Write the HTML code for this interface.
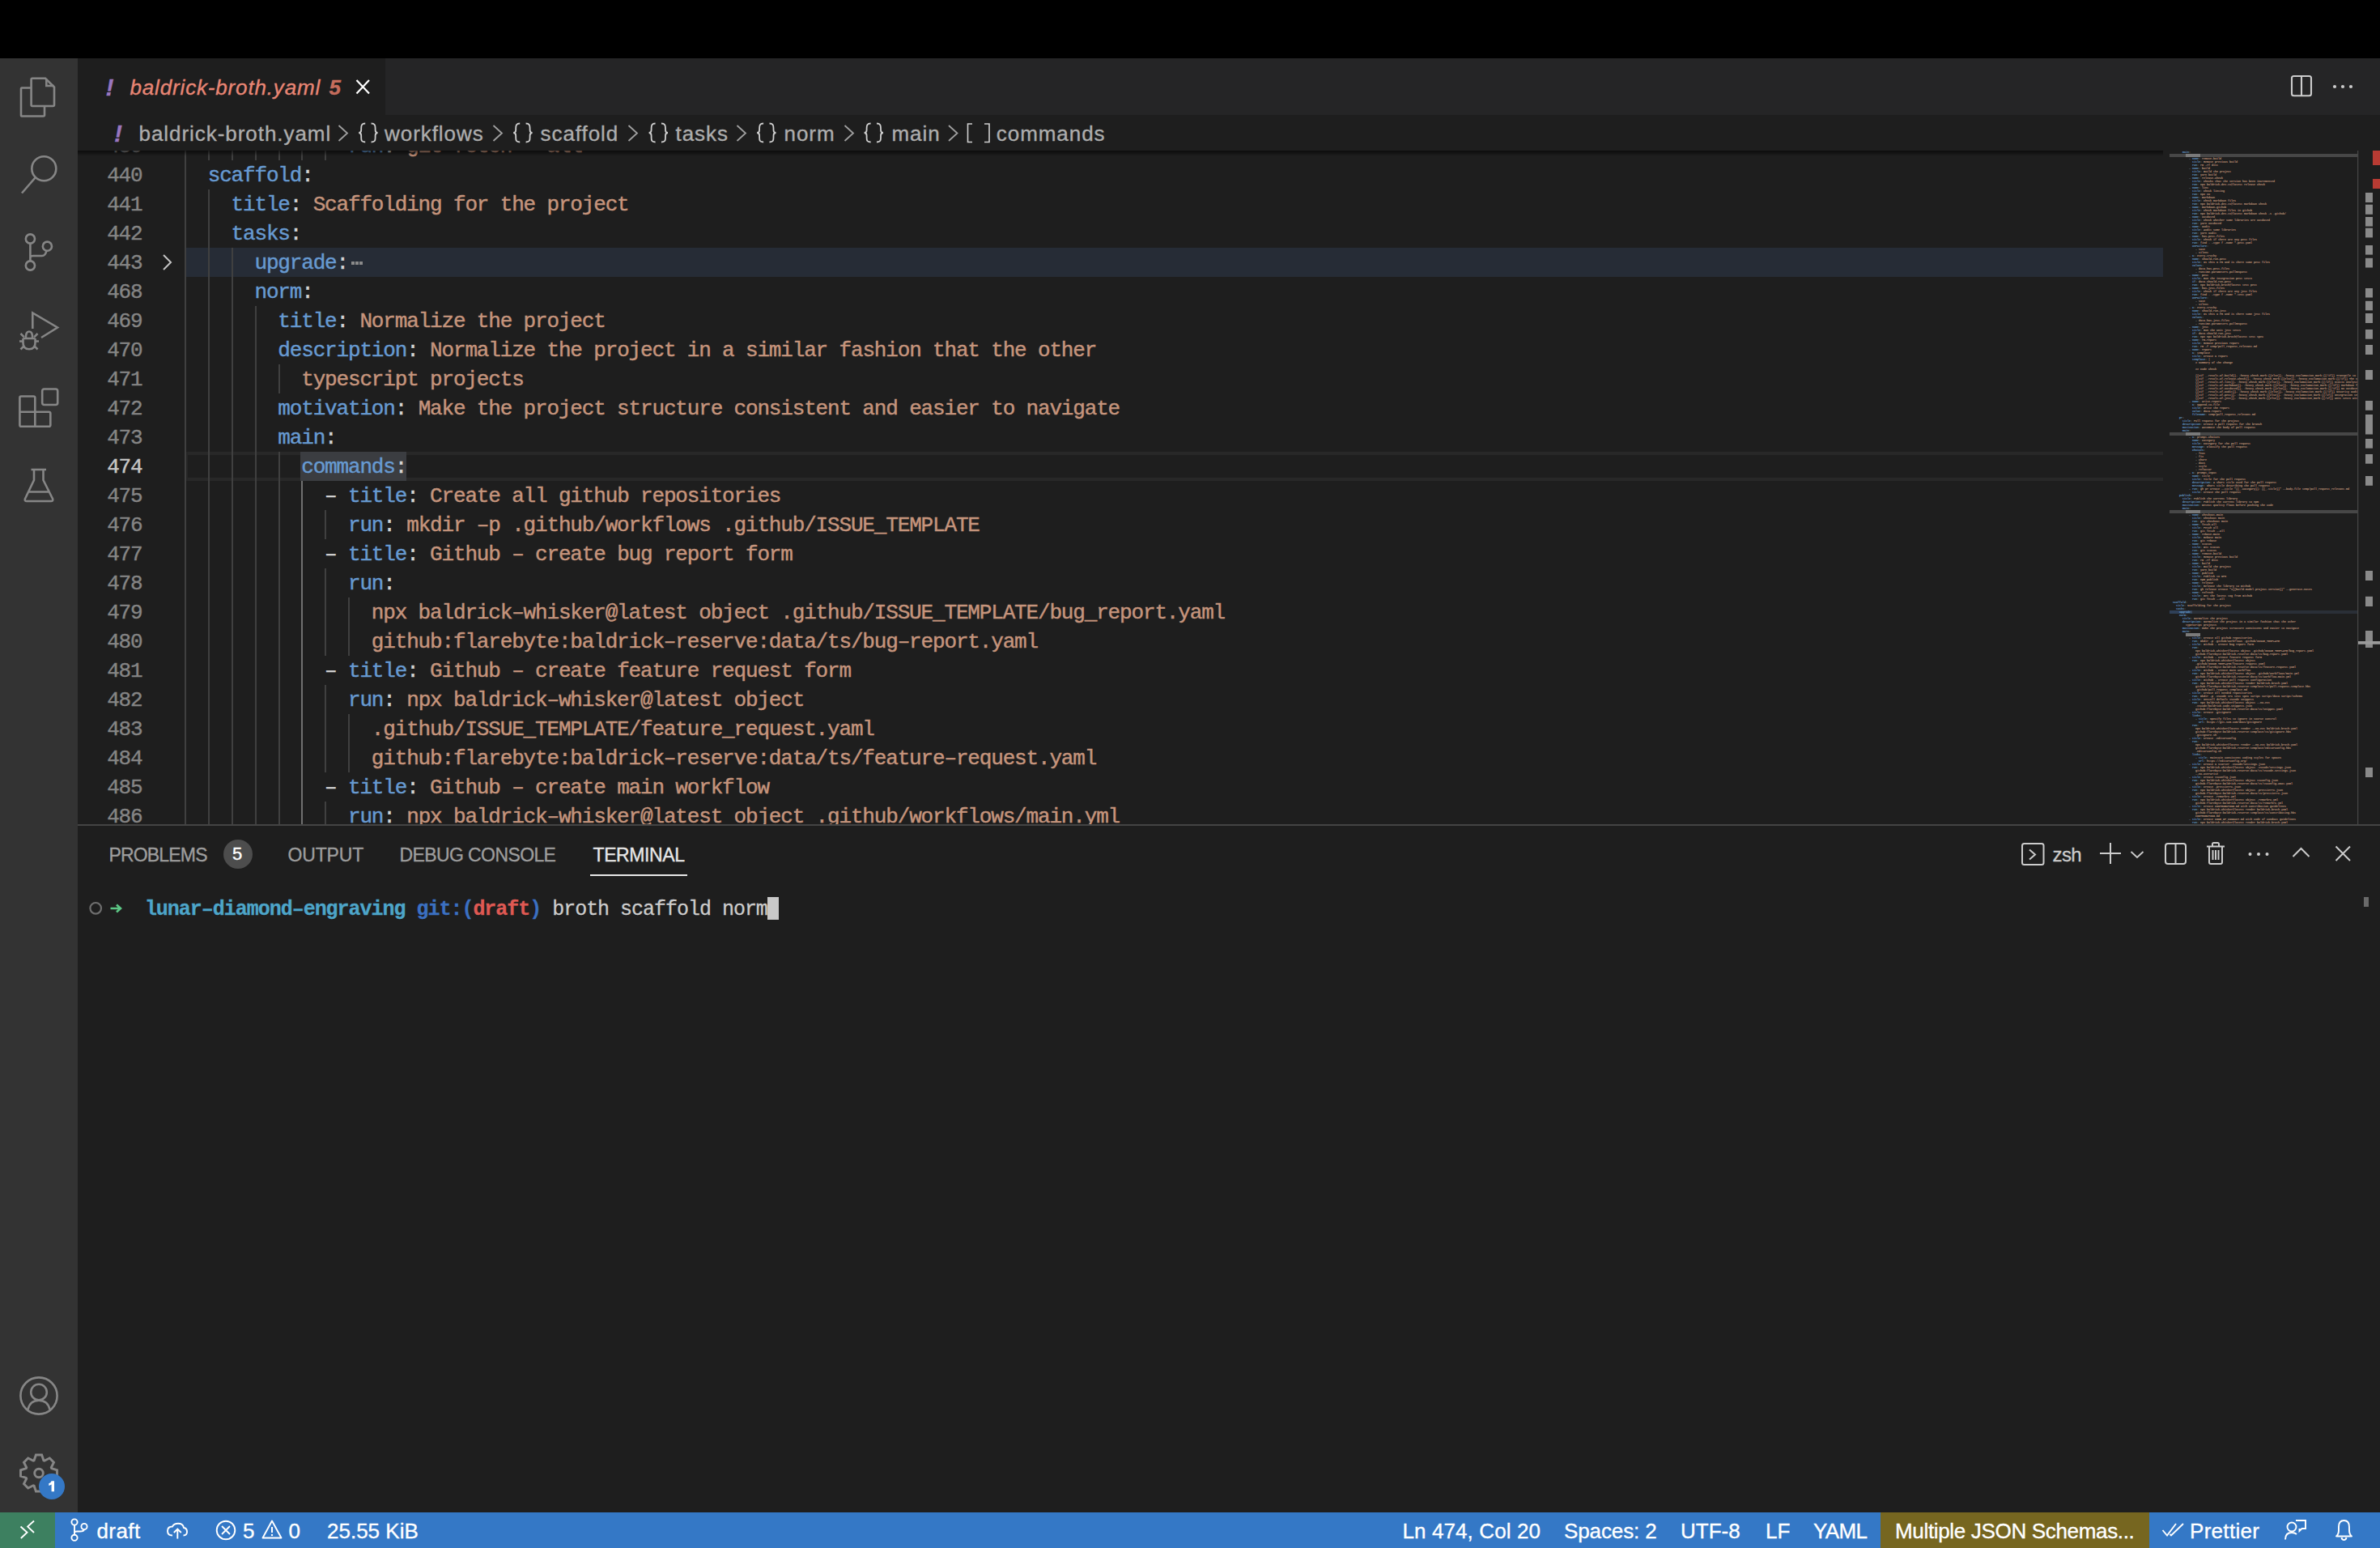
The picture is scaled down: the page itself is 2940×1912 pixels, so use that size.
<!DOCTYPE html><html><head><meta charset="utf-8"><style>
*{margin:0;padding:0;box-sizing:border-box}
html,body{width:2940px;height:1912px;overflow:hidden;background:#1e1e1e}
body{position:relative;font-family:"Liberation Sans",sans-serif}
.a{position:absolute}
.mono{font-family:"Liberation Mono",monospace}
.row{position:absolute;left:0;height:36px;white-space:pre;-webkit-text-stroke:0.45px currentColor;font-family:"Liberation Mono",monospace;font-size:26px;letter-spacing:-1.162px;line-height:36px}
.ln{position:absolute;left:96px;-webkit-text-stroke:0.4px currentColor;width:79.5px;text-align:right;height:36px;white-space:pre;font-family:"Liberation Mono",monospace;font-size:26px;letter-spacing:-1.162px;line-height:36px;color:#858585}
.k{color:#679ad1}.s{color:#c5947c}.p{color:#d4d4d4}
.g{position:absolute;width:2px;background:#404040}
.ui{font-family:"Liberation Sans",sans-serif;white-space:pre}
.mm{position:absolute;height:3px}
svg{position:absolute;overflow:visible}
.mmt{position:absolute;left:0;top:0;transform-origin:0 0;transform:scale(0.2);white-space:pre;font-family:'Liberation Mono',monospace;font-size:16.667px;line-height:20px;font-weight:bold;color:#c5947c;width:1200px}
.mmt b{color:#679ad1;font-weight:bold}
.mmt i{color:#9a9a9a;font-style:normal}
</style></head><body>
<div class="a" style="left:0;top:0;width:2940px;height:72px;background:#000"></div>
<div class="a" style="left:0;top:72px;width:96px;height:1796px;background:#333333"></div>
<div class="a" style="left:96px;top:72px;width:2844px;height:70px;background:#252526"></div>
<div class="a" style="left:96px;top:72px;width:380px;height:70px;background:#1e1e1e"></div>
<div class="a" style="left:96px;top:142px;width:2844px;height:876px;background:#1e1e1e"></div>
<div class="a" style="left:96px;top:186px;width:2576px;height:832px;overflow:hidden"><div class="a" style="left:-96px;top:-186px;width:2940px;height:1912px">
<div class="a" style="left:228px;top:306px;width:2444px;height:36px;background:#262c36"></div>
<div class="a" style="left:230px;top:558px;width:2442px;height:4px;background:#282828"></div>
<div class="a" style="left:230px;top:590px;width:2442px;height:4px;background:#282828"></div>
<div class="a" style="left:230px;top:558px;width:2px;height:36px;background:#262626"></div>
<div class="a" style="left:370.7px;top:558px;width:130.9px;height:36px;background:#3b3d41"></div>
<div class="g" style="left:228.0px;top:162px;height:36px;background:#404040"></div>
<div class="g" style="left:256.9px;top:162px;height:36px;background:#404040"></div>
<div class="g" style="left:285.8px;top:162px;height:36px;background:#404040"></div>
<div class="g" style="left:314.6px;top:162px;height:36px;background:#404040"></div>
<div class="g" style="left:343.5px;top:162px;height:36px;background:#404040"></div>
<div class="g" style="left:372.4px;top:162px;height:36px;background:#404040"></div>
<div class="g" style="left:401.3px;top:162px;height:36px;background:#404040"></div>
<div class="g" style="left:228.0px;top:198px;height:36px;background:#404040"></div>
<div class="g" style="left:228.0px;top:234px;height:36px;background:#404040"></div>
<div class="g" style="left:256.9px;top:234px;height:36px;background:#404040"></div>
<div class="g" style="left:228.0px;top:270px;height:36px;background:#404040"></div>
<div class="g" style="left:256.9px;top:270px;height:36px;background:#404040"></div>
<div class="g" style="left:228.0px;top:306px;height:36px;background:#404040"></div>
<div class="g" style="left:256.9px;top:306px;height:36px;background:#404040"></div>
<div class="g" style="left:285.8px;top:306px;height:36px;background:#404040"></div>
<div class="g" style="left:228.0px;top:342px;height:36px;background:#404040"></div>
<div class="g" style="left:256.9px;top:342px;height:36px;background:#404040"></div>
<div class="g" style="left:285.8px;top:342px;height:36px;background:#404040"></div>
<div class="g" style="left:228.0px;top:378px;height:36px;background:#404040"></div>
<div class="g" style="left:256.9px;top:378px;height:36px;background:#404040"></div>
<div class="g" style="left:285.8px;top:378px;height:36px;background:#404040"></div>
<div class="g" style="left:314.6px;top:378px;height:36px;background:#404040"></div>
<div class="g" style="left:228.0px;top:414px;height:36px;background:#404040"></div>
<div class="g" style="left:256.9px;top:414px;height:36px;background:#404040"></div>
<div class="g" style="left:285.8px;top:414px;height:36px;background:#404040"></div>
<div class="g" style="left:314.6px;top:414px;height:36px;background:#404040"></div>
<div class="g" style="left:228.0px;top:450px;height:36px;background:#404040"></div>
<div class="g" style="left:256.9px;top:450px;height:36px;background:#404040"></div>
<div class="g" style="left:285.8px;top:450px;height:36px;background:#404040"></div>
<div class="g" style="left:314.6px;top:450px;height:36px;background:#404040"></div>
<div class="g" style="left:343.5px;top:450px;height:36px;background:#404040"></div>
<div class="g" style="left:228.0px;top:486px;height:36px;background:#404040"></div>
<div class="g" style="left:256.9px;top:486px;height:36px;background:#404040"></div>
<div class="g" style="left:285.8px;top:486px;height:36px;background:#404040"></div>
<div class="g" style="left:314.6px;top:486px;height:36px;background:#404040"></div>
<div class="g" style="left:228.0px;top:522px;height:36px;background:#404040"></div>
<div class="g" style="left:256.9px;top:522px;height:36px;background:#404040"></div>
<div class="g" style="left:285.8px;top:522px;height:36px;background:#404040"></div>
<div class="g" style="left:314.6px;top:522px;height:36px;background:#404040"></div>
<div class="g" style="left:228.0px;top:558px;height:36px;background:#404040"></div>
<div class="g" style="left:256.9px;top:558px;height:36px;background:#404040"></div>
<div class="g" style="left:285.8px;top:558px;height:36px;background:#404040"></div>
<div class="g" style="left:314.6px;top:558px;height:36px;background:#404040"></div>
<div class="g" style="left:343.5px;top:558px;height:36px;background:#404040"></div>
<div class="g" style="left:228.0px;top:594px;height:36px;background:#404040"></div>
<div class="g" style="left:256.9px;top:594px;height:36px;background:#404040"></div>
<div class="g" style="left:285.8px;top:594px;height:36px;background:#404040"></div>
<div class="g" style="left:314.6px;top:594px;height:36px;background:#404040"></div>
<div class="g" style="left:343.5px;top:594px;height:36px;background:#404040"></div>
<div class="g" style="left:372.4px;top:594px;height:36px;background:#707070"></div>
<div class="g" style="left:228.0px;top:630px;height:36px;background:#404040"></div>
<div class="g" style="left:256.9px;top:630px;height:36px;background:#404040"></div>
<div class="g" style="left:285.8px;top:630px;height:36px;background:#404040"></div>
<div class="g" style="left:314.6px;top:630px;height:36px;background:#404040"></div>
<div class="g" style="left:343.5px;top:630px;height:36px;background:#404040"></div>
<div class="g" style="left:372.4px;top:630px;height:36px;background:#707070"></div>
<div class="g" style="left:401.3px;top:630px;height:36px;background:#404040"></div>
<div class="g" style="left:228.0px;top:666px;height:36px;background:#404040"></div>
<div class="g" style="left:256.9px;top:666px;height:36px;background:#404040"></div>
<div class="g" style="left:285.8px;top:666px;height:36px;background:#404040"></div>
<div class="g" style="left:314.6px;top:666px;height:36px;background:#404040"></div>
<div class="g" style="left:343.5px;top:666px;height:36px;background:#404040"></div>
<div class="g" style="left:372.4px;top:666px;height:36px;background:#707070"></div>
<div class="g" style="left:228.0px;top:702px;height:36px;background:#404040"></div>
<div class="g" style="left:256.9px;top:702px;height:36px;background:#404040"></div>
<div class="g" style="left:285.8px;top:702px;height:36px;background:#404040"></div>
<div class="g" style="left:314.6px;top:702px;height:36px;background:#404040"></div>
<div class="g" style="left:343.5px;top:702px;height:36px;background:#404040"></div>
<div class="g" style="left:372.4px;top:702px;height:36px;background:#707070"></div>
<div class="g" style="left:401.3px;top:702px;height:36px;background:#404040"></div>
<div class="g" style="left:228.0px;top:738px;height:36px;background:#404040"></div>
<div class="g" style="left:256.9px;top:738px;height:36px;background:#404040"></div>
<div class="g" style="left:285.8px;top:738px;height:36px;background:#404040"></div>
<div class="g" style="left:314.6px;top:738px;height:36px;background:#404040"></div>
<div class="g" style="left:343.5px;top:738px;height:36px;background:#404040"></div>
<div class="g" style="left:372.4px;top:738px;height:36px;background:#707070"></div>
<div class="g" style="left:401.3px;top:738px;height:36px;background:#404040"></div>
<div class="g" style="left:430.1px;top:738px;height:36px;background:#404040"></div>
<div class="g" style="left:228.0px;top:774px;height:36px;background:#404040"></div>
<div class="g" style="left:256.9px;top:774px;height:36px;background:#404040"></div>
<div class="g" style="left:285.8px;top:774px;height:36px;background:#404040"></div>
<div class="g" style="left:314.6px;top:774px;height:36px;background:#404040"></div>
<div class="g" style="left:343.5px;top:774px;height:36px;background:#404040"></div>
<div class="g" style="left:372.4px;top:774px;height:36px;background:#707070"></div>
<div class="g" style="left:401.3px;top:774px;height:36px;background:#404040"></div>
<div class="g" style="left:430.1px;top:774px;height:36px;background:#404040"></div>
<div class="g" style="left:228.0px;top:810px;height:36px;background:#404040"></div>
<div class="g" style="left:256.9px;top:810px;height:36px;background:#404040"></div>
<div class="g" style="left:285.8px;top:810px;height:36px;background:#404040"></div>
<div class="g" style="left:314.6px;top:810px;height:36px;background:#404040"></div>
<div class="g" style="left:343.5px;top:810px;height:36px;background:#404040"></div>
<div class="g" style="left:372.4px;top:810px;height:36px;background:#707070"></div>
<div class="g" style="left:228.0px;top:846px;height:36px;background:#404040"></div>
<div class="g" style="left:256.9px;top:846px;height:36px;background:#404040"></div>
<div class="g" style="left:285.8px;top:846px;height:36px;background:#404040"></div>
<div class="g" style="left:314.6px;top:846px;height:36px;background:#404040"></div>
<div class="g" style="left:343.5px;top:846px;height:36px;background:#404040"></div>
<div class="g" style="left:372.4px;top:846px;height:36px;background:#707070"></div>
<div class="g" style="left:401.3px;top:846px;height:36px;background:#404040"></div>
<div class="g" style="left:228.0px;top:882px;height:36px;background:#404040"></div>
<div class="g" style="left:256.9px;top:882px;height:36px;background:#404040"></div>
<div class="g" style="left:285.8px;top:882px;height:36px;background:#404040"></div>
<div class="g" style="left:314.6px;top:882px;height:36px;background:#404040"></div>
<div class="g" style="left:343.5px;top:882px;height:36px;background:#404040"></div>
<div class="g" style="left:372.4px;top:882px;height:36px;background:#707070"></div>
<div class="g" style="left:401.3px;top:882px;height:36px;background:#404040"></div>
<div class="g" style="left:430.1px;top:882px;height:36px;background:#404040"></div>
<div class="g" style="left:228.0px;top:918px;height:36px;background:#404040"></div>
<div class="g" style="left:256.9px;top:918px;height:36px;background:#404040"></div>
<div class="g" style="left:285.8px;top:918px;height:36px;background:#404040"></div>
<div class="g" style="left:314.6px;top:918px;height:36px;background:#404040"></div>
<div class="g" style="left:343.5px;top:918px;height:36px;background:#404040"></div>
<div class="g" style="left:372.4px;top:918px;height:36px;background:#707070"></div>
<div class="g" style="left:401.3px;top:918px;height:36px;background:#404040"></div>
<div class="g" style="left:430.1px;top:918px;height:36px;background:#404040"></div>
<div class="g" style="left:228.0px;top:954px;height:36px;background:#404040"></div>
<div class="g" style="left:256.9px;top:954px;height:36px;background:#404040"></div>
<div class="g" style="left:285.8px;top:954px;height:36px;background:#404040"></div>
<div class="g" style="left:314.6px;top:954px;height:36px;background:#404040"></div>
<div class="g" style="left:343.5px;top:954px;height:36px;background:#404040"></div>
<div class="g" style="left:372.4px;top:954px;height:36px;background:#707070"></div>
<div class="g" style="left:228.0px;top:990px;height:36px;background:#404040"></div>
<div class="g" style="left:256.9px;top:990px;height:36px;background:#404040"></div>
<div class="g" style="left:285.8px;top:990px;height:36px;background:#404040"></div>
<div class="g" style="left:314.6px;top:990px;height:36px;background:#404040"></div>
<div class="g" style="left:343.5px;top:990px;height:36px;background:#404040"></div>
<div class="g" style="left:372.4px;top:990px;height:36px;background:#707070"></div>
<div class="g" style="left:401.3px;top:990px;height:36px;background:#404040"></div>
<div class="row" style="left:227.8px;top:163px">              <span class="k">run</span><span class="p">:</span><span class="s"> git fetch ––all</span></div>
<div class="ln" style="top:163px;color:#858585">439</div>
<div class="row" style="left:227.8px;top:199px">  <span class="k">scaffold</span><span class="p">:</span></div>
<div class="ln" style="top:199px;color:#858585">440</div>
<div class="row" style="left:227.8px;top:235px">    <span class="k">title</span><span class="p">:</span><span class="s"> Scaffolding for the project</span></div>
<div class="ln" style="top:235px;color:#858585">441</div>
<div class="row" style="left:227.8px;top:271px">    <span class="k">tasks</span><span class="p">:</span></div>
<div class="ln" style="top:271px;color:#858585">442</div>
<div class="row" style="left:227.8px;top:307px">      <span class="k">upgrade</span><span class="p">:</span></div>
<div class="ln" style="top:307px;color:#858585">443</div>
<div class="row" style="left:227.8px;top:343px">      <span class="k">norm</span><span class="p">:</span></div>
<div class="ln" style="top:343px;color:#858585">468</div>
<div class="row" style="left:227.8px;top:379px">        <span class="k">title</span><span class="p">:</span><span class="s"> Normalize the project</span></div>
<div class="ln" style="top:379px;color:#858585">469</div>
<div class="row" style="left:227.8px;top:415px">        <span class="k">description</span><span class="p">:</span><span class="s"> Normalize the project in a similar fashion that the other</span></div>
<div class="ln" style="top:415px;color:#858585">470</div>
<div class="row" style="left:227.8px;top:451px">          <span class="s">typescript projects</span></div>
<div class="ln" style="top:451px;color:#858585">471</div>
<div class="row" style="left:227.8px;top:487px">        <span class="k">motivation</span><span class="p">:</span><span class="s"> Make the project structure consistent and easier to navigate</span></div>
<div class="ln" style="top:487px;color:#858585">472</div>
<div class="row" style="left:227.8px;top:523px">        <span class="k">main</span><span class="p">:</span></div>
<div class="ln" style="top:523px;color:#858585">473</div>
<div class="row" style="left:227.8px;top:559px">          <span class="k">commands</span><span class="p">:</span></div>
<div class="ln" style="top:559px;color:#c6c6c6">474</div>
<div class="row" style="left:227.8px;top:595px">            <span class="p">– </span><span class="k">title</span><span class="p">:</span><span class="s"> Create all github repositories</span></div>
<div class="ln" style="top:595px;color:#858585">475</div>
<div class="row" style="left:227.8px;top:631px">              <span class="k">run</span><span class="p">:</span><span class="s"> mkdir –p .github/workflows .github/ISSUE_TEMPLATE</span></div>
<div class="ln" style="top:631px;color:#858585">476</div>
<div class="row" style="left:227.8px;top:667px">            <span class="p">– </span><span class="k">title</span><span class="p">:</span><span class="s"> Github – create bug report form</span></div>
<div class="ln" style="top:667px;color:#858585">477</div>
<div class="row" style="left:227.8px;top:703px">              <span class="k">run</span><span class="p">:</span></div>
<div class="ln" style="top:703px;color:#858585">478</div>
<div class="row" style="left:227.8px;top:739px">                <span class="s">npx baldrick–whisker@latest object .github/ISSUE_TEMPLATE/bug_report.yaml</span></div>
<div class="ln" style="top:739px;color:#858585">479</div>
<div class="row" style="left:227.8px;top:775px">                <span class="s">github:flarebyte:baldrick–reserve:data/ts/bug–report.yaml</span></div>
<div class="ln" style="top:775px;color:#858585">480</div>
<div class="row" style="left:227.8px;top:811px">            <span class="p">– </span><span class="k">title</span><span class="p">:</span><span class="s"> Github – create feature request form</span></div>
<div class="ln" style="top:811px;color:#858585">481</div>
<div class="row" style="left:227.8px;top:847px">              <span class="k">run</span><span class="p">:</span><span class="s"> npx baldrick–whisker@latest object</span></div>
<div class="ln" style="top:847px;color:#858585">482</div>
<div class="row" style="left:227.8px;top:883px">                <span class="s">.github/ISSUE_TEMPLATE/feature_request.yaml</span></div>
<div class="ln" style="top:883px;color:#858585">483</div>
<div class="row" style="left:227.8px;top:919px">                <span class="s">github:flarebyte:baldrick–reserve:data/ts/feature–request.yaml</span></div>
<div class="ln" style="top:919px;color:#858585">484</div>
<div class="row" style="left:227.8px;top:955px">            <span class="p">– </span><span class="k">title</span><span class="p">:</span><span class="s"> Github – create main workflow</span></div>
<div class="ln" style="top:955px;color:#858585">485</div>
<div class="row" style="left:227.8px;top:991px">              <span class="k">run</span><span class="p">:</span><span class="s"> npx baldrick–whisker@latest object .github/workflows/main.yml</span></div>
<div class="ln" style="top:991px;color:#858585">486</div>
<div class="a" style="left:433.9px;top:323px;width:14px;height:4px;background:repeating-linear-gradient(90deg,#8a8a8a 0 4px,transparent 4px 5px)"></div>
<svg style="left:196px;top:314px" width="20" height="20" viewBox="0 0 20 20"><path d="M6 1 L15 10 L6 19" fill="none" stroke="#c5c5c5" stroke-width="2"/></svg>
</div></div>
<div class="a" style="left:96px;top:186px;width:2576px;height:7px;background:linear-gradient(rgba(0,0,0,0.6),rgba(0,0,0,0))"></div>
<div class="a" style="left:0;top:1868px;width:2940px;height:44px;background:#3478c6"></div>
<div class="a" style="left:0;top:1868px;width:68px;height:44px;background:#3d8060"></div>
<div class="a" style="left:2323px;top:1868px;width:332px;height:44px;background:#766620"></div>
<svg style="left:0;top:0" width="2940" height="1912" viewBox="0 0 2940 1912"><rect x="2680" y="190" width="232" height="4" fill="#474747"/><rect x="2700" y="190" width="18" height="4" fill="#7a7a7a"/><rect x="2680" y="534" width="232" height="4" fill="#474747"/><rect x="2700" y="534" width="18" height="4" fill="#7a7a7a"/><rect x="2680" y="630" width="232" height="4" fill="#474747"/><rect x="2700" y="630" width="18" height="4" fill="#7a7a7a"/><rect x="2700" y="782" width="18" height="4" fill="#7a7a7a"/><rect x="2680" y="754" width="28" height="4" fill="#2f4058"/><rect x="2708" y="754" width="204" height="4" fill="#2a2f37"/><rect x="2912" y="186" width="1.3" height="832" fill="#454545"/><rect x="2922" y="238" width="9" height="12.0" fill="#8a8a8a"/><rect x="2922" y="252.7" width="9" height="12.1" fill="#8a8a8a"/><rect x="2922" y="268" width="9" height="11.6" fill="#8a8a8a"/><rect x="2922" y="281.7" width="9" height="11.7" fill="#8a8a8a"/><rect x="2922" y="303" width="9" height="11.6" fill="#8a8a8a"/><rect x="2922" y="318.8" width="9" height="11.7" fill="#8a8a8a"/><rect x="2922" y="356" width="9" height="11.5" fill="#8a8a8a"/><rect x="2922" y="371.8" width="9" height="11.6" fill="#8a8a8a"/><rect x="2922" y="387" width="9" height="12.0" fill="#8a8a8a"/><rect x="2922" y="407" width="9" height="11.7" fill="#8a8a8a"/><rect x="2922" y="426" width="9" height="12.0" fill="#8a8a8a"/><rect x="2922" y="457" width="9" height="12.0" fill="#8a8a8a"/><rect x="2922" y="495" width="9" height="11.8" fill="#8a8a8a"/><rect x="2922" y="512" width="9" height="24.5" fill="#8a8a8a"/><rect x="2922" y="542" width="9" height="11.7" fill="#8a8a8a"/><rect x="2922" y="561" width="9" height="11.7" fill="#8a8a8a"/><rect x="2922" y="588" width="9" height="11.8" fill="#8a8a8a"/><rect x="2922" y="705" width="9" height="12.0" fill="#8a8a8a"/><rect x="2922" y="736.8" width="9" height="12.2" fill="#8a8a8a"/><rect x="2922" y="779" width="9" height="21.0" fill="#8a8a8a"/><rect x="2922" y="948" width="9" height="12.0" fill="#8a8a8a"/><rect x="2931" y="186" width="9" height="18" fill="#b83b33"/><rect x="2931" y="221" width="9" height="12" fill="#b83b33"/><rect x="2913" y="792" width="27" height="3.8" fill="#9a9a9a"/></svg>
<div class="a" style="left:2680px;top:186px;width:232px;height:832px;overflow:hidden"><div class="mmt">        <b>main</b><i>:</i>

            <i>- </i><b>name</b><i>:</i> remove-build
              <b>title</b><i>:</i> Remove previous build
              <b>run</b><i>:</i> rm -rf dist
            <i>- </i><b>name</b><i>:</i> build
              <b>title</b><i>:</i> Build the project
              <b>run</b><i>:</i> yarn build
            <i>- </i><b>name</b><i>:</i> release-check
              <b>title</b><i>:</i> Checks that the version has been incremented
              <b>run</b><i>:</i> npx baldrick-dev-ts@latest release check
            <i>- </i><b>name</b><i>:</i> lint
              <b>title</b><i>:</i> Check linting
              <b>run</b><i>:</i> npx xo
            <i>- </i><b>name</b><i>:</i> markdown
              <b>title</b><i>:</i> Check markdown files
              <b>run</b><i>:</i> npx baldrick-dev-ts@latest markdown check
            <i>- </i><b>name</b><i>:</i> markdown-github
              <b>title</b><i>:</i> Check markdown files in github
              <b>run</b><i>:</i> npx baldrick-dev-ts@latest markdown check -s .github/
            <i>- </i><b>name</b><i>:</i> outdated
              <b>title</b><i>:</i> Check whether some libraries are outdated
              <b>run</b><i>:</i> yarn outdated
            <i>- </i><b>name</b><i>:</i> audit
              <b>title</b><i>:</i> Audit some libraries
              <b>run</b><i>:</i> yarn audit
            <i>- </i><b>name</b><i>:</i> has-pest-files
              <b>title</b><i>:</i> Check if there are any pest files
              <b>run</b><i>:</i> find . -type f -name *.pest.yaml
              <b>onFailure</b><i>:</i>
                <i>- </i>save
                <i>- </i>silent
            <i>- </i><b>a</b><i>:</i> every-truthy
              <b>name</b><i>:</i> should-run-pest
              <b>title</b><i>:</i> Is this a PR and is there some pest files
              <b>values</b><i>:</i>
                <i>- </i>data.has-pest-files
                <i>- </i>runtime.parameters.pullRequest
            <i>- </i><b>name</b><i>:</i> pest
              <b>title</b><i>:</i> Run the integration pest tests
              <b>if</b><i>:</i> data.should-run-pest
              <b>run</b><i>:</i> npx baldrick-broth@latest test pest
            <i>- </i><b>name</b><i>:</i> has-jest-files
              <b>title</b><i>:</i> Check if there are any jest files
              <b>run</b><i>:</i> find . -type f -name *.test.yaml
              <b>onFailure</b><i>:</i>
                <i>- </i>save
                <i>- </i>silent
            <i>- </i><b>a</b><i>:</i> every-truthy
              <b>name</b><i>:</i> should-run-jest
              <b>title</b><i>:</i> Is this a PR and is there some jest files
              <b>values</b><i>:</i>
                <i>- </i>data.has-jest-files
                <i>- </i>runtime.parameters.pullRequest
            <i>- </i><b>name</b><i>:</i> jest
              <b>title</b><i>:</i> Run the unit jest tests
              <b>if</b><i>:</i> data.should-run-jest
              <b>run</b><i>:</i> npx npx baldrick-broth@latest test spec
            <i>- </i><b>name</b><i>:</i> rm-report
              <b>title</b><i>:</i> Remove previous report
              <b>run</b><i>:</i> rm -f temp/pull_request_relevant.md
            <i>- </i><b>name</b><i>:</i> report
              <b>a</b><i>:</i> template
              <b>title</b><i>:</i> Create a report
              <b>template</b><i>:</i> |
                # Summary of the change

                ## Code check

                {{#if _.result-of-build}}- :heavy_check_mark:{{else}}- :heavy_exclamation_mark:{{/if}} Transpile to javascript
                {{#if _.result-of-release-check}}- :heavy_check_mark:{{else}}- :heavy_exclamation_mark:{{/if}} The version
                {{#if _.result-of-lint}}- :heavy_check_mark:{{else}}- :heavy_exclamation_mark:{{/if}} Static analysis
                {{#if _.result-of-markdown}}- :heavy_check_mark:{{else}}- :heavy_exclamation_mark:{{/if}} Markdown files
                {{#if _.result-of-outdated}}- :heavy_check_mark:{{else}}- :heavy_exclamation_mark:{{/if}} No outdated
                {{#if _.result-of-audit}}- :heavy_check_mark:{{else}}- :heavy_exclamation_mark:{{/if}} Security audit
                {{#if _.result-of-pest}}- :heavy_check_mark:{{else}}- :heavy_exclamation_mark:{{/if}} Integration tests
                {{#if _.result-of-jest}}- :heavy_check_mark:{{else}}- :heavy_exclamation_mark:{{/if}} Unit tests with
            <i>- </i><b>name</b><i>:</i> write-report
              <b>a</b><i>:</i> append-to-file
              <b>title</b><i>:</i> Write the report
              <b>value</b><i>:</i> data.report
              <b>filename</b><i>:</i> temp/pull_request_relevant.md
      <b>pr</b><i>:</i>
        <b>title</b><i>:</i> Pull request for the project
        <b>description</b><i>:</i> Create a pull request for the branch
        <b>motivation</b><i>:</i> Automate the body of pull request
        <b>main</b><i>:</i>

            <i>- </i><b>a</b><i>:</i> prompt-choices
              <b>name</b><i>:</i> category
              <b>title</b><i>:</i> Category for the pull request
              <b>message</b><i>:</i> Classify the pull request
              <b>choices</b><i>:</i>
                <i>- </i>feat
                <i>- </i>fix
                <i>- </i>chore
                <i>- </i>docs
                <i>- </i>style
                <i>- </i>refactor
            <i>- </i><b>a</b><i>:</i> prompt-input
              <b>name</b><i>:</i> title
              <b>title</b><i>:</i> Title for the pull request
              <b>description</b><i>:</i> A short title used for the pull request
              <b>message</b><i>:</i> Short title describing the pull request
            <i>- </i><b>run</b><i>:</i> gh pr create --title &quot;{{_.category}}: {{_.title}}&quot; --body-file temp/pull_request_relevant.md
              <b>title</b><i>:</i> Create the pull request
      <b>publish</b><i>:</i>
        <b>title</b><i>:</i> Publish the current library
        <b>description</b><i>:</i> Publish the current library to npm
        <b>motivation</b><i>:</i> Detect quality flaws before pushing the code
        <b>main</b><i>:</i>

            <i>- </i><b>name</b><i>:</i> checkout-main
              <b>title</b><i>:</i> Checkout main
              <b>run</b><i>:</i> git checkout main
            <i>- </i><b>name</b><i>:</i> fetch-all
              <b>title</b><i>:</i> Fetch all
              <b>run</b><i>:</i> git fetch --all
            <i>- </i><b>name</b><i>:</i> rebase-main
              <b>title</b><i>:</i> Rebase main
              <b>run</b><i>:</i> git rebase
            <i>- </i><b>name</b><i>:</i> status
              <b>title</b><i>:</i> Git status
              <b>run</b><i>:</i> git status
            <i>- </i><b>name</b><i>:</i> remove-build
              <b>title</b><i>:</i> Remove previous build
              <b>run</b><i>:</i> rm -rf dist
            <i>- </i><b>name</b><i>:</i> build
              <b>title</b><i>:</i> Build the project
              <b>run</b><i>:</i> yarn build
            <i>- </i><b>name</b><i>:</i> publish
              <b>title</b><i>:</i> Publish to NPM
              <b>run</b><i>:</i> npm publish
            <i>- </i><b>name</b><i>:</i> release
              <b>title</b><i>:</i> Release the library to Github
              <b>run</b><i>:</i> gh release create &quot;v{{build.model.project.version}}&quot; --generate-notes
            <i>- </i><b>name</b><i>:</i> refresh
              <b>title</b><i>:</i> Get the latest tag from Github
              <b>run</b><i>:</i> git fetch --all
  <b>scaffold</b><i>:</i>
    <b>title</b><i>:</i> Scaffolding for the project
    <b>tasks</b><i>:</i>
      <b>upgrade</b><i>:</i>
      <b>norm</b><i>:</i>
        <b>title</b><i>:</i> Normalize the project
        <b>description</b><i>:</i> Normalize the project in a similar fashion that the other
          typescript projects
        <b>motivation</b><i>:</i> Make the project structure consistent and easier to navigate
        <b>main</b><i>:</i>

            <i>- </i><b>title</b><i>:</i> Create all github repositories
              <b>run</b><i>:</i> mkdir -p .github/workflows .github/ISSUE_TEMPLATE
            <i>- </i><b>title</b><i>:</i> Github - create bug report form
              <b>run</b><i>:</i>
                npx baldrick-whisker@latest object .github/ISSUE_TEMPLATE/bug_report.yaml
                github:flarebyte:baldrick-reserve:data/ts/bug-report.yaml
            <i>- </i><b>title</b><i>:</i> Github - create feature request form
              <b>run</b><i>:</i> npx baldrick-whisker@latest object
                .github/ISSUE_TEMPLATE/feature_request.yaml
                github:flarebyte:baldrick-reserve:data/ts/feature-request.yaml
            <i>- </i><b>title</b><i>:</i> Github - create main workflow
              <b>run</b><i>:</i> npx baldrick-whisker@latest object .github/workflows/main.yml
                github:flarebyte:baldrick-reserve:data/ts/workflow-main.yml
            <i>- </i><b>title</b><i>:</i> Github - create pull request configuration
              <b>run</b><i>:</i> npx baldrick-whisker@latest render baldrick-broth.yaml
                github:flarebyte:baldrick-reserve:template/ts/pull-request-template.hbs
                .github/pull_request_template.md
            <i>- </i><b>title</b><i>:</i> Create all needed repositories
              <b>run</b><i>:</i> mkdir -p .vscode src test spec script script/data script/schema
            <i>- </i><b>title</b><i>:</i> Install default vscode snippets
              <b>run</b><i>:</i> npx baldrick-whisker@latest object --no-ext
                .vscode/baldrick.code-snippets.json
                github:flarebyte:baldrick-reserve:data/ts/snippet.yaml
            <i>- </i><b>title</b><i>:</i> Create .gitignore
              <b>links</b><i>:</i>
                <i>- </i><b>title</b><i>:</i> Specify files to ignore in source control
                  <b>url</b><i>:</i> https://git-scm.com/docs/gitignore
              <b>run</b><i>:</i>
                npx baldrick-whisker@latest render --no-ext baldrick-broth.yaml
                github:flarebyte:baldrick-reserve:template/ts/gitignore.hbs
                .gitignore.sh
            <i>- </i><b>title</b><i>:</i> Create .editorconfig
              <b>run</b><i>:</i>
                npx baldrick-whisker@latest render --no-ext baldrick-broth.yaml
                github:flarebyte:baldrick-reserve:template/editorconfig.hbs
                .editorconfig.sh
              <b>links</b><i>:</i>
                <i>- </i><b>title</b><i>:</i> Maintain consistent coding styles for spaces
                  <b>url</b><i>:</i> https://editorconfig.org/
            <i>- </i><b>title</b><i>:</i> Create a starter .vscode/settings.json
              <b>run</b><i>:</i> npx baldrick-whisker@latest object .vscode/settings.json
                github:flarebyte:baldrick-reserve:data/ts/vscode-settings.json
                --no-overwrite
            <i>- </i><b>title</b><i>:</i> Create tsconfig.json
              <b>run</b><i>:</i> npx baldrick-whisker@latest object tsconfig.json
                github:flarebyte:baldrick-reserve:data/ts/tsconfig-2021.yaml
            <i>- </i><b>title</b><i>:</i> Create .prettierrc.json
              <b>run</b><i>:</i> npx baldrick-whisker@latest object .prettierrc.json
                github:flarebyte:baldrick-reserve:data/ts/prettierrc.json
            <i>- </i><b>title</b><i>:</i> Create .remarkrc.yml
              <b>run</b><i>:</i> npx baldrick-whisker@latest object .remarkrc.yml
                github:flarebyte:baldrick-reserve:data/ts/remarkrc.yml
            <i>- </i><b>title</b><i>:</i> Create CONTRIBUTING.md with contribution guidelines
              <b>run</b><i>:</i> npx baldrick-whisker@latest render baldrick-broth.yaml
                github:flarebyte:baldrick-reserve:template/ts/contributing.hbs
                CONTRIBUTING.md
            <i>- </i><b>title</b><i>:</i> Create CODE_OF_CONDUCT.md with code of conduct guidelines
              <b>run</b><i>:</i> npx baldrick-whisker@latest render baldrick-broth.yaml</div></div>
<div class="a" style="left:130.5px;top:90.10px;font-family:'Liberation Sans',sans-serif;font-size:30px;line-height:36.00px;color:#9976bf;white-space:pre;letter-spacing:0px;font-weight:bold;font-style:italic;-webkit-text-stroke:0.35px #9976bf;">!</div>
<div class="a" style="left:160.5px;top:93.39px;font-family:'Liberation Sans',sans-serif;font-size:26px;line-height:31.20px;color:#e88675;white-space:pre;letter-spacing:0.84px;font-weight:normal;font-style:italic;-webkit-text-stroke:0.35px #e88675;">baldrick-broth.yaml</div>
<div class="a" style="left:406.5px;top:93.39px;font-family:'Liberation Sans',sans-serif;font-size:26px;line-height:31.20px;color:#c46c5c;white-space:pre;letter-spacing:0px;font-weight:bold;font-style:italic;-webkit-text-stroke:0.35px #c46c5c;">5</div>
<div class="a" style="left:141px;top:146.60px;font-family:'Liberation Sans',sans-serif;font-size:30px;line-height:36.00px;color:#9976bf;white-space:pre;letter-spacing:0px;font-weight:bold;font-style:italic;-webkit-text-stroke:0.35px #9976bf;">!</div>
<div class="a" style="left:171.5px;top:150.39px;font-family:'Liberation Sans',sans-serif;font-size:26px;line-height:31.20px;color:#adadad;white-space:pre;letter-spacing:0.95px;font-weight:normal;font-style:normal;-webkit-text-stroke:0.35px #adadad;">baldrick-broth.yaml</div>
<div class="a" style="left:475.0px;top:150.39px;font-family:'Liberation Sans',sans-serif;font-size:26px;line-height:31.20px;color:#adadad;white-space:pre;letter-spacing:0.95px;font-weight:normal;font-style:normal;-webkit-text-stroke:0.35px #adadad;">workflows</div>
<div class="a" style="left:667.5px;top:150.39px;font-family:'Liberation Sans',sans-serif;font-size:26px;line-height:31.20px;color:#adadad;white-space:pre;letter-spacing:0.95px;font-weight:normal;font-style:normal;-webkit-text-stroke:0.35px #adadad;">scaffold</div>
<div class="a" style="left:834.5px;top:150.39px;font-family:'Liberation Sans',sans-serif;font-size:26px;line-height:31.20px;color:#adadad;white-space:pre;letter-spacing:0.95px;font-weight:normal;font-style:normal;-webkit-text-stroke:0.35px #adadad;">tasks</div>
<div class="a" style="left:968.5px;top:150.39px;font-family:'Liberation Sans',sans-serif;font-size:26px;line-height:31.20px;color:#adadad;white-space:pre;letter-spacing:0.95px;font-weight:normal;font-style:normal;-webkit-text-stroke:0.35px #adadad;">norm</div>
<div class="a" style="left:1101.5px;top:150.39px;font-family:'Liberation Sans',sans-serif;font-size:26px;line-height:31.20px;color:#adadad;white-space:pre;letter-spacing:0.95px;font-weight:normal;font-style:normal;-webkit-text-stroke:0.35px #adadad;">main</div>
<div class="a" style="left:1230.8px;top:150.39px;font-family:'Liberation Sans',sans-serif;font-size:26px;line-height:31.20px;color:#adadad;white-space:pre;letter-spacing:0.95px;font-weight:normal;font-style:normal;-webkit-text-stroke:0.35px #adadad;">commands</div>
<svg style="left:0;top:0" width="2940" height="1912" viewBox="0 0 2940 1912"><path d="M418.5 155 L429.0 164.5 L418.5 174" fill="none" stroke="#a0a0a0" stroke-width="1.8"/><path d="M609.5 155 L620.0 164.5 L609.5 174" fill="none" stroke="#a0a0a0" stroke-width="1.8"/><path d="M776.5 155 L787.0 164.5 L776.5 174" fill="none" stroke="#a0a0a0" stroke-width="1.8"/><path d="M910.5 155 L921.0 164.5 L910.5 174" fill="none" stroke="#a0a0a0" stroke-width="1.8"/><path d="M1043.5 155 L1054.0 164.5 L1043.5 174" fill="none" stroke="#a0a0a0" stroke-width="1.8"/><path d="M1172 155 L1182.5 164.5 L1172 174" fill="none" stroke="#a0a0a0" stroke-width="1.8"/><path d="M451.20000000000005 152.5 C446.6 152.5 446.20000000000005 155 446.20000000000005 158.5 L446.20000000000005 160.5 C446.20000000000005 163 445.1 164 443.20000000000005 164 C445.1 164 446.20000000000005 165 446.20000000000005 167.5 L446.20000000000005 170 C446.20000000000005 173.5 446.6 175.5 451.20000000000005 175.5" fill="none" stroke="#d0d0d0" stroke-width="1.8"/><path d="M458.6 152.5 C463.20000000000005 152.5 463.6 155 463.6 158.5 L463.6 160.5 C463.6 163 464.70000000000005 164 466.6 164 C464.70000000000005 164 463.6 165 463.6 167.5 L463.6 170 C463.6 173.5 463.20000000000005 175.5 458.6 175.5" fill="none" stroke="#d0d0d0" stroke-width="1.8"/><path d="M642.2 152.5 C637.6 152.5 637.2 155 637.2 158.5 L637.2 160.5 C637.2 163 636.1 164 634.2 164 C636.1 164 637.2 165 637.2 167.5 L637.2 170 C637.2 173.5 637.6 175.5 642.2 175.5" fill="none" stroke="#d0d0d0" stroke-width="1.8"/><path d="M649.6 152.5 C654.2 152.5 654.6 155 654.6 158.5 L654.6 160.5 C654.6 163 655.7 164 657.6 164 C655.7 164 654.6 165 654.6 167.5 L654.6 170 C654.6 173.5 654.2 175.5 649.6 175.5" fill="none" stroke="#d0d0d0" stroke-width="1.8"/><path d="M809.6 152.5 C805 152.5 804.6 155 804.6 158.5 L804.6 160.5 C804.6 163 803.5 164 801.6 164 C803.5 164 804.6 165 804.6 167.5 L804.6 170 C804.6 173.5 805 175.5 809.6 175.5" fill="none" stroke="#d0d0d0" stroke-width="1.8"/><path d="M817 152.5 C821.6 152.5 822 155 822 158.5 L822 160.5 C822 163 823.1 164 825 164 C823.1 164 822 165 822 167.5 L822 170 C822 173.5 821.6 175.5 817 175.5" fill="none" stroke="#d0d0d0" stroke-width="1.8"/><path d="M943.1 152.5 C938.5 152.5 938.1 155 938.1 158.5 L938.1 160.5 C938.1 163 937.0 164 935.1 164 C937.0 164 938.1 165 938.1 167.5 L938.1 170 C938.1 173.5 938.5 175.5 943.1 175.5" fill="none" stroke="#d0d0d0" stroke-width="1.8"/><path d="M950.5 152.5 C955.1 152.5 955.5 155 955.5 158.5 L955.5 160.5 C955.5 163 956.6 164 958.5 164 C956.6 164 955.5 165 955.5 167.5 L955.5 170 C955.5 173.5 955.1 175.5 950.5 175.5" fill="none" stroke="#d0d0d0" stroke-width="1.8"/><path d="M1075.6 152.5 C1071 152.5 1070.6 155 1070.6 158.5 L1070.6 160.5 C1070.6 163 1069.5 164 1067.6 164 C1069.5 164 1070.6 165 1070.6 167.5 L1070.6 170 C1070.6 173.5 1071 175.5 1075.6 175.5" fill="none" stroke="#d0d0d0" stroke-width="1.8"/><path d="M1083 152.5 C1087.6 152.5 1088 155 1088 158.5 L1088 160.5 C1088 163 1089.1 164 1091 164 C1089.1 164 1088 165 1088 167.5 L1088 170 C1088 173.5 1087.6 175.5 1083 175.5" fill="none" stroke="#d0d0d0" stroke-width="1.8"/><path d="M1201 153 L1195.5 153 L1195.5 175.5 L1201 175.5 M1216 153 L1222 153 L1222 175.5 L1216 175.5" fill="none" stroke="#d0d0d0" stroke-width="1.6"/><path d="M440.5 99 L456 115.5 M456 99 L440.5 115.5" stroke="#ffffff" stroke-width="2.2"/><rect x="2831" y="94" width="24" height="24.3" rx="2.5" fill="none" stroke="#cccccc" stroke-width="2.1"/><path d="M2843 94 L2843 118.3" stroke="#cccccc" stroke-width="2.1"/><circle cx="2884" cy="107" r="2.1" fill="#cccccc"/><circle cx="2894" cy="107" r="2.1" fill="#cccccc"/><circle cx="2904" cy="107" r="2.1" fill="#cccccc"/><path d="M38.5 108.5 L27 108.5 Q26 108.5 26 110 L26 142.5 Q26 143.5 27.5 143.5 L53.5 143.5 Q55 143.5 55 142 L55 131.5" fill="none" stroke="#868686" stroke-width="2.6"/><path d="M40 96.8 L56 96.8 L67 107.5 L67 129.5 Q67 131 65.5 131 L40 131 Q38.6 131 38.6 129.5 L38.6 98.3 Q38.6 96.8 40 96.8 Z" fill="none" stroke="#868686" stroke-width="2.6"/><path d="M57.3 97.5 L57.3 106 L66.5 106" fill="none" stroke="#868686" stroke-width="2.6"/><circle cx="54.3" cy="208.3" r="15" fill="none" stroke="#868686" stroke-width="2.6"/><path d="M43.5 219.5 L27 238.5" stroke="#868686" stroke-width="2.6"/><circle cx="37.4" cy="295" r="5.6" fill="none" stroke="#868686" stroke-width="2.6"/><circle cx="58.4" cy="304.2" r="5.6" fill="none" stroke="#868686" stroke-width="2.6"/><circle cx="37.4" cy="328" r="5.6" fill="none" stroke="#868686" stroke-width="2.6"/><path d="M37.4 300.6 L37.4 322.4 M37.4 318 Q37.4 316 41 316 L52 316 Q56 316 57.5 309.8" fill="none" stroke="#868686" stroke-width="2.6"/><path d="M40.3 406 L40.3 386.5 L71 404.5 L51 417" fill="none" stroke="#868686" stroke-width="2.6"/><path d="M32 418 Q31.5 409.5 36 409.5 Q40.5 409.5 40 418 M28.5 418 L43.5 418 M28.5 418 L28.5 423.5 Q28.5 431.2 36 431.2 Q43.5 431.2 43.5 423.5 L43.5 418" fill="none" stroke="#868686" stroke-width="2.6"/><path d="M24 421.5 L28.5 421.5 M43.5 421.5 L48 421.5 M25.5 412 L29.8 416.3 M46.5 412 L42.2 416.3 M25.5 431.5 L29.8 427.2 M46.5 431.5 L42.2 427.2" fill="none" stroke="#868686" stroke-width="2.6"/><rect x="52.2" y="480.5" width="19" height="19.5" rx="2.5" fill="none" stroke="#868686" stroke-width="2.6"/><path d="M26 489.5 L41.5 489.5 Q43.3 489.5 43.3 491.3 L43.3 508.8 L60.5 508.8 Q62.3 508.8 62.3 510.5 L62.3 525 Q62.3 526.8 60.5 526.8 L26 526.8 Q24.4 526.8 24.4 525 L24.4 491.3 Q24.4 489.5 26 489.5 Z M24.4 508.8 L43.3 508.8 L43.3 526.8" fill="none" stroke="#868686" stroke-width="2.6"/><path d="M38.5 580 L57 580 M42 580 L42 593 L31 616 Q30 619 33 619 L63 619 Q66 619 65 616 L53.5 593 L53.5 580 M35.5 607.5 L60.5 607.5" fill="none" stroke="#868686" stroke-width="2.6" stroke-linejoin="round"/><circle cx="48" cy="1724" r="22.6" fill="none" stroke="#868686" stroke-width="2.6"/><circle cx="48" cy="1719.5" r="9.8" fill="none" stroke="#868686" stroke-width="2.6"/><path d="M34.5 1741 Q37 1729.7 48 1729.7 Q59 1729.7 61.5 1741" fill="none" stroke="#868686" stroke-width="2.6"/><path d="M42.1 1803.8 L44.4 1797.0 L51.6 1797.0 L53.9 1803.8 L54.9 1804.2 L61.3 1801.0 L66.5 1806.2 L63.3 1812.6 L63.7 1813.6 L70.5 1815.9 L70.5 1823.1 L63.7 1825.4 L63.3 1826.4 L66.5 1832.8 L61.3 1838.0 L54.9 1834.8 L53.9 1835.2 L51.6 1842.0 L44.4 1842.0 L42.1 1835.2 L41.1 1834.8 L34.7 1838.0 L29.5 1832.8 L32.7 1826.4 L32.3 1825.4 L25.5 1823.1 L25.5 1815.9 L32.3 1813.6 L32.7 1812.6 L29.5 1806.2 L34.7 1801.0 L41.1 1804.2 Z" fill="none" stroke="#868686" stroke-width="2.9" stroke-linejoin="miter"/><circle cx="48" cy="1819.5" r="5.3" fill="none" stroke="#868686" stroke-width="2.9"/><circle cx="64" cy="1836" r="16" fill="#3478c6"/><path d="M25.5 1885.5 L33.5 1892.8 L25.8 1900 M42 1878.5 L34.2 1885.6 L42 1893" fill="none" stroke="#ffffff" stroke-width="1.9"/><circle cx="92" cy="1880" r="3.6" fill="none" stroke="#ffffff" stroke-width="1.9"/><circle cx="92" cy="1899.3" r="3.6" fill="none" stroke="#ffffff" stroke-width="1.9"/><circle cx="104" cy="1885.5" r="3.6" fill="none" stroke="#ffffff" stroke-width="1.9"/><path d="M92 1883.6 L92 1895.7 M92 1893 Q92 1891.5 95 1891.5 L99 1891.5 Q103.5 1891.5 104 1889" fill="none" stroke="#ffffff" stroke-width="1.9"/><path d="M213 1896.5 Q207 1896.5 207 1891 Q207 1885.5 213 1885.5 Q215 1881.8 220 1881.8 Q226 1881.8 227 1887 Q231 1887.5 231 1892 Q231 1896.5 226.5 1896.5 M219.3 1900.5 L219.3 1888.5 M214.8 1893 L219.3 1888.5 L223.8 1893" fill="none" stroke="#ffffff" stroke-width="1.9"/><circle cx="279" cy="1890" r="11.3" fill="none" stroke="#ffffff" stroke-width="1.9"/><path d="M274 1885 L284 1895 M284 1885 L274 1895" stroke="#ffffff" stroke-width="1.9"/><path d="M336 1878.5 L347.5 1899.5 L324.5 1899.5 Z" fill="none" stroke="#ffffff" stroke-width="1.9" stroke-linejoin="round"/><path d="M336 1886 L336 1893" stroke="#ffffff" stroke-width="2"/><circle cx="336" cy="1896" r="1.2" fill="#ffffff"/><path d="M2671.5 1890 L2677 1896.5 L2688 1882 M2680.5 1895 L2682 1896.5 L2697 1882" fill="none" stroke="#ffffff" stroke-width="1.9"/><circle cx="2831" cy="1886" r="5.5" fill="none" stroke="#ffffff" stroke-width="1.9"/><path d="M2823 1901.5 Q2823 1893 2831 1893 Q2835 1893 2837 1895 M2836 1878 L2848 1878 L2848 1888 L2843.5 1888 L2840.5 1891 L2840.5 1888" fill="none" stroke="#ffffff" stroke-width="1.9"/><path d="M2886 1897.5 L2905 1897.5 Q2902 1895 2902 1890 L2902 1886 Q2902 1878 2895.5 1878 Q2889 1878 2889 1886 L2889 1890 Q2889 1895 2886 1897.5 Z M2892.5 1899 Q2893 1902 2895.5 1902 Q2898 1902 2898.5 1899" fill="none" stroke="#ffffff" stroke-width="1.9" stroke-linejoin="round"/><rect x="2498" y="1042" width="26.5" height="26" rx="2.5" fill="none" stroke="#cccccc" stroke-width="2"/><path d="M2507 1049.5 L2514 1055.5 L2507 1061.5" fill="none" stroke="#cccccc" stroke-width="2"/><path d="M2607 1041 L2607 1067 M2594 1054 L2620 1054" stroke="#cccccc" stroke-width="2"/><path d="M2632.5 1052 L2640 1059 L2647.5 1052" fill="none" stroke="#cccccc" stroke-width="1.8"/><rect x="2675" y="1042" width="25" height="25" rx="3" fill="none" stroke="#cccccc" stroke-width="2"/><path d="M2687.5 1042 L2687.5 1067" stroke="#cccccc" stroke-width="2"/><path d="M2726 1045.5 L2748 1045.5 M2733 1045.5 L2733 1042.5 Q2733 1041 2734.5 1041 L2739.5 1041 Q2741 1041 2741 1042.5 L2741 1045.5 M2729 1046 L2729 1065 Q2729 1067 2731 1067 L2743 1067 Q2745 1067 2745 1065 L2745 1046 M2733.5 1050 L2733.5 1062 M2737 1050 L2737 1062 M2740.5 1050 L2740.5 1062" fill="none" stroke="#cccccc" stroke-width="2"/><circle cx="2779.5" cy="1055" r="2" fill="#cccccc"/><circle cx="2790" cy="1055" r="2" fill="#cccccc"/><circle cx="2800.5" cy="1055" r="2" fill="#cccccc"/><path d="M2832.5 1058 L2842.5 1048 L2852.5 1058" fill="none" stroke="#cccccc" stroke-width="2"/><path d="M2885.5 1045.5 L2903 1063 M2903 1045.5 L2885.5 1063" stroke="#cccccc" stroke-width="2"/><circle cx="118.2" cy="1121.8" r="6.8" fill="none" stroke="#6e6e6e" stroke-width="2.2"/><path d="M136.5 1122 L149 1122 M144 1117.5 L149 1122 L144 1126.5" fill="none" stroke="#5cc785" stroke-width="2.6"/></svg>
<svg style="left:0;top:0" width="100" height="1912" viewBox="0 0 100 1912"><path d="M63.6 1829.3 L67 1829.3 L67 1842.2 L63.6 1842.2 L63.6 1833.6 Q62.5 1834.6 60.3 1835 L60.3 1832.2 Q62.8 1831.6 63.6 1829.3 Z" fill="#ffffff"/></svg>
<div class="a" style="left:119.5px;top:1875.79px;font-family:'Liberation Sans',sans-serif;font-size:26px;line-height:31.20px;color:#ffffff;white-space:pre;letter-spacing:0.4px;font-weight:normal;font-style:normal;-webkit-text-stroke:0.35px #ffffff;">draft</div>
<div class="a" style="left:300px;top:1875.79px;font-family:'Liberation Sans',sans-serif;font-size:26px;line-height:31.20px;color:#ffffff;white-space:pre;letter-spacing:0px;font-weight:normal;font-style:normal;-webkit-text-stroke:0.35px #ffffff;">5</div>
<div class="a" style="left:356.5px;top:1875.79px;font-family:'Liberation Sans',sans-serif;font-size:26px;line-height:31.20px;color:#ffffff;white-space:pre;letter-spacing:0px;font-weight:normal;font-style:normal;-webkit-text-stroke:0.35px #ffffff;">0</div>
<div class="a" style="left:404px;top:1875.79px;font-family:'Liberation Sans',sans-serif;font-size:26px;line-height:31.20px;color:#ffffff;white-space:pre;letter-spacing:0px;font-weight:normal;font-style:normal;-webkit-text-stroke:0.35px #ffffff;">25.55 KiB</div>
<div class="a" style="left:1732.5px;top:1875.79px;font-family:'Liberation Sans',sans-serif;font-size:26px;line-height:31.20px;color:#ffffff;white-space:pre;letter-spacing:0.1px;font-weight:normal;font-style:normal;-webkit-text-stroke:0.35px #ffffff;">Ln 474, Col 20</div>
<div class="a" style="left:1932px;top:1875.79px;font-family:'Liberation Sans',sans-serif;font-size:26px;line-height:31.20px;color:#ffffff;white-space:pre;letter-spacing:-0.1px;font-weight:normal;font-style:normal;-webkit-text-stroke:0.35px #ffffff;">Spaces: 2</div>
<div class="a" style="left:2076px;top:1875.79px;font-family:'Liberation Sans',sans-serif;font-size:26px;line-height:31.20px;color:#ffffff;white-space:pre;letter-spacing:0px;font-weight:normal;font-style:normal;-webkit-text-stroke:0.35px #ffffff;">UTF-8</div>
<div class="a" style="left:2181px;top:1875.79px;font-family:'Liberation Sans',sans-serif;font-size:26px;line-height:31.20px;color:#ffffff;white-space:pre;letter-spacing:0px;font-weight:normal;font-style:normal;-webkit-text-stroke:0.35px #ffffff;">LF</div>
<div class="a" style="left:2240px;top:1875.79px;font-family:'Liberation Sans',sans-serif;font-size:26px;line-height:31.20px;color:#ffffff;white-space:pre;letter-spacing:-0.6px;font-weight:normal;font-style:normal;-webkit-text-stroke:0.35px #ffffff;">YAML</div>
<div class="a" style="left:2341px;top:1875.79px;font-family:'Liberation Sans',sans-serif;font-size:26px;line-height:31.20px;color:#ffffff;white-space:pre;letter-spacing:-0.33px;font-weight:normal;font-style:normal;-webkit-text-stroke:0.35px #ffffff;">Multiple JSON Schemas...</div>
<div class="a" style="left:2705px;top:1875.79px;font-family:'Liberation Sans',sans-serif;font-size:26px;line-height:31.20px;color:#ffffff;white-space:pre;letter-spacing:0.3px;font-weight:normal;font-style:normal;-webkit-text-stroke:0.35px #ffffff;">Prettier</div>
<div class="a" style="left:96px;top:1018px;width:2844px;height:2px;background:#444444"></div>
<div class="a" style="left:134.5px;top:1043.23px;font-family:'Liberation Sans',sans-serif;font-size:23px;line-height:27.60px;color:#9d9d9d;white-space:pre;letter-spacing:-0.83px;font-weight:normal;font-style:normal;-webkit-text-stroke:0.35px #9d9d9d;">PROBLEMS</div>
<div class="a" style="left:355.5px;top:1043.23px;font-family:'Liberation Sans',sans-serif;font-size:23px;line-height:27.60px;color:#9d9d9d;white-space:pre;letter-spacing:-0.15px;font-weight:normal;font-style:normal;-webkit-text-stroke:0.35px #9d9d9d;">OUTPUT</div>
<div class="a" style="left:493.5px;top:1043.23px;font-family:'Liberation Sans',sans-serif;font-size:23px;line-height:27.60px;color:#9d9d9d;white-space:pre;letter-spacing:-0.6px;font-weight:normal;font-style:normal;-webkit-text-stroke:0.35px #9d9d9d;">DEBUG CONSOLE</div>
<div class="a" style="left:732.5px;top:1043.23px;font-family:'Liberation Sans',sans-serif;font-size:23px;line-height:27.60px;color:#e7e7e7;white-space:pre;letter-spacing:-0.4px;font-weight:normal;font-style:normal;-webkit-text-stroke:0.35px #e7e7e7;">TERMINAL</div>
<div class="a" style="left:276px;top:1037px;width:36px;height:36px;border-radius:18px;background:#4d4d4d"></div>
<div class="a" style="left:287px;top:1042.18px;font-family:'Liberation Sans',sans-serif;font-size:22px;line-height:26.40px;color:#ffffff;white-space:pre;letter-spacing:0px;font-weight:normal;font-style:normal;-webkit-text-stroke:0.35px #ffffff;">5</div>
<div class="a" style="left:729px;top:1080px;width:120px;height:2px;background:#e7e7e7"></div>
<div class="a" style="left:2535.5px;top:1041.78px;font-family:'Liberation Sans',sans-serif;font-size:24px;line-height:28.80px;color:#cccccc;white-space:pre;letter-spacing:-0.6px;font-weight:normal;font-style:normal;-webkit-text-stroke:0.35px #cccccc;-webkit-text-stroke:0.3px #cccccc">zsh</div>
<div class="a mono" style="left:178.9px;top:1105.5px;font-size:25px;line-height:36px;letter-spacing:-1.020px;color:#4da5c9;font-weight:bold;white-space:pre;-webkit-text-stroke:0.3px #4da5c9">lunar–diamond–engraving</div>
<div class="a mono" style="left:514.5px;top:1105.5px;font-size:25px;line-height:36px;letter-spacing:-1.020px;color:#3b70c2;font-weight:bold;white-space:pre;-webkit-text-stroke:0.3px #3b70c2">git:(</div>
<div class="a mono" style="left:584.4px;top:1105.5px;font-size:25px;line-height:36px;letter-spacing:-1.020px;color:#df5953;font-weight:bold;white-space:pre;-webkit-text-stroke:0.3px #df5953">draft</div>
<div class="a mono" style="left:654.3px;top:1105.5px;font-size:25px;line-height:36px;letter-spacing:-1.020px;color:#3b70c2;font-weight:bold;white-space:pre;-webkit-text-stroke:0.3px #3b70c2">)</div>
<div class="a mono" style="left:682.2px;top:1105.5px;font-size:25px;line-height:36px;letter-spacing:-1.020px;color:#cccccc;font-weight:normal;white-space:pre;-webkit-text-stroke:0.3px #cccccc">broth scaffold norm</div>
<div class="a" style="left:948.3px;top:1108px;width:13.6px;height:28px;background:#c8c8c8"></div>
<div class="a" style="left:2920px;top:1108px;width:6px;height:12px;background:#6a6a6a"></div>
</body></html>
